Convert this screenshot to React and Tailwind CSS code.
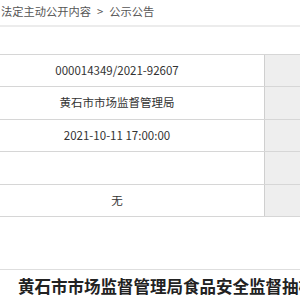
import React from 'react';

const rows = [
  '000014349/2021-92607',
  '黄石市市场监督管理局',
  '2021-10-11 17:00:00',
  '',
  '无',
];

export default function App() {
  return (
    <div
      className="w-[300px] h-[300px] overflow-hidden bg-white"
      style={{ fontFamily: '"Noto Sans CJK SC", "Noto Sans", sans-serif' }}
    >
      <div className="h-[27px] border-b-2 border-[#ececec] flex items-center pl-[1px] pb-[2px] text-[11.25px] text-[#555] whitespace-nowrap">
        <span>法定主动公开内容</span>
        <span className="mx-[6px]">&gt;</span>
        <span>公示公告</span>
      </div>
      <div className="h-[27px]" />
      <div className="ml-[-30px] w-[360px] border-t border-[#d6d6d6]">
        {rows.map((text, i) => (
          <div key={i} className="flex h-[32.4px] border-b border-[#d6d6d6]">
            <div className="w-[294px] flex items-center justify-center text-[11.5px] text-[#333]">
              {text}
            </div>
            <div className="flex-1 border-l border-[#cfcfcf] bg-[#eeeeee]" />
          </div>
        ))}
      </div>
      <div className="h-[52px]" />
      <div className="border-t border-[#dedede] pl-[18px] pt-[4px] text-[16.5px] font-bold text-[#222] whitespace-nowrap leading-[24px]">
        黄石市市场监督管理局食品安全监督抽检信息公告
      </div>
    </div>
  );
}
